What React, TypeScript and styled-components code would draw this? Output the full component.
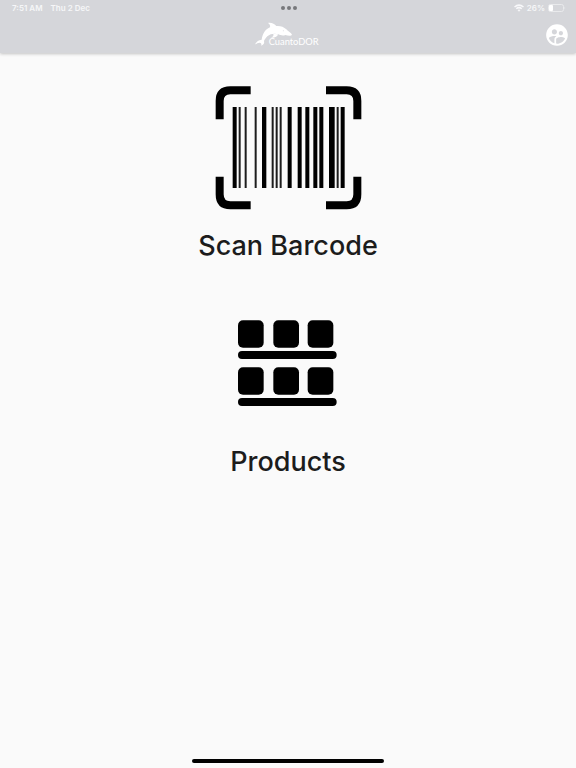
import React from "react";
import styled, { createGlobalStyle } from "styled-components";
import { MdSupervisedUserCircle } from "react-icons/md";

const GlobalStyle = createGlobalStyle`
  * { box-sizing: border-box; }
  body { margin: 0; background: #fafafa; font-family: Inter, "Liberation Sans", sans-serif; }
`;

const Screen = styled.div`
  min-height: 100vh;
  display: flex;
  flex-direction: column;
`;

const Header = styled.header`
  background: #d5d6da;
  color: #fff;
  box-shadow: 0 1px 3px rgba(0, 0, 0, 0.22);
`;

const StatusBar = styled.div`
  display: grid;
  grid-template-columns: 1fr auto 1fr;
  align-items: center;
  height: 16px;
  padding: 0 10px 0 12px;
  font-size: 8px;
  line-height: 16px;
  font-weight: 600;
  color: #f6f6f8;
`;

const StatusGroup = styled.div<{ $end?: boolean; $gap: number }>`
  display: flex;
  align-items: center;
  justify-content: ${(p) => (p.$end ? "flex-end" : "flex-start")};
  gap: ${(p) => p.$gap}px;
`;

const Dots = styled.div`
  display: flex;
  gap: 2px;
`;

const Dot = styled.span`
  width: 4px;
  height: 4px;
  border-radius: 50%;
  background: #77787b;
`;

const TitleBar = styled.div`
  display: grid;
  grid-template-columns: 1fr auto 1fr;
  align-items: center;
  height: 37px;
  padding: 0 6px;
`;

const Logo = styled.svg`
  grid-column: 2;
  display: block;
`;

const AccountButton = styled.button`
  grid-column: 3;
  justify-self: end;
  display: flex;
  padding: 0;
  border: 0;
  background: none;
  color: #fff;
  font-size: 26px;
  cursor: pointer;
`;

const Main = styled.main`
  flex: 1;
  display: flex;
  flex-direction: column;
  align-items: center;
  gap: 58px;
  padding-top: 33px;
`;

const Tile = styled.button<{ $gap: number }>`
  display: flex;
  flex-direction: column;
  align-items: center;
  gap: ${(p) => p.$gap}px;
  padding: 0;
  border: 0;
  background: none;
  color: #1c1c1c;
  font-family: inherit;
  font-size: 27px;
  line-height: 32px;
  font-weight: 500;
  cursor: pointer;
`;

const Footer = styled.footer`
  display: flex;
  justify-content: center;
  padding-bottom: 5px;
`;

const HomeIndicator = styled.div`
  width: 33.33%;
  height: 4px;
  border-radius: 2px;
  background: #000;
`;

const bars: [number, number][] = [
  [81, 12], [99, 6], [117, 6], [147, 6], [169, 13], [198, 6], [210, 6], [222, 6],
  [246, 12], [276, 12], [299, 12], [323, 12], [341, 12], [370, 17], [393, 6], [405, 12],
];

const BarcodeIcon = () => (
  <svg width="147" height="124" viewBox="28 23 441 372" aria-hidden="true">
    <path
      d="M42 123V68Q42 36 74 36H135M361 36H423Q455 36 455 68V123M455 295V348Q455 381 423 381H361M135 381H74Q42 381 42 348V295"
      fill="none"
      stroke="#000"
      strokeWidth="24"
    />
    {bars.map(([x, w]) => (
      <rect key={x} x={x} y="86" width={w} height="243" fill={w === 6 ? "#1d1d1d" : "#000"} />
    ))}
  </svg>
);

const ShelfIcon = () => (
  <svg width="99" height="86" viewBox="41 28 297 258" aria-hidden="true">
    {[29, 170].map((y) => (
      <g key={y}>
        {[41, 147, 250].map((x) => (
          <rect key={x} x={x} y={y} width="77" height="82" rx="15" />
        ))}
        <rect x="41" y={y + 92} width="296" height="24" rx="12" />
      </g>
    ))}
  </svg>
);

const WifiIcon = () => (
  <svg width="10" height="8" viewBox="0 0 20 15" fill="none" stroke="#f8f8fa" strokeWidth="3" aria-label="Wi-Fi">
    <path d="M1 5.5Q10-2 19 5.5M4.5 9Q10 4.5 15.5 9" />
    <path d="M7 11.5Q10 9 13 11.5L10 15Z" fill="#f8f8fa" stroke="none" />
  </svg>
);

const BatteryIcon = () => (
  <svg width="18" height="8" viewBox="0 0 18 8" aria-label="Battery">
    <rect x="0.5" y="0.5" width="15" height="7" rx="2" fill="none" stroke="#e9eaec" />
    <rect x="1" y="1" width="4" height="6" rx="1" fill="#fff" />
    <path d="M16.5 2.5Q18 4 16.5 5.5Z" fill="#e9eaec" />
  </svg>
);

const DolphinLogo = () => (
  <Logo width="66" height="26" viewBox="0 0 198 78" role="img" aria-label="CuantoDOR">
    <path
      d="M0 67C5 58 11 54 20 53C23 35 30 23 45 16C47 10 43 5 39 3C49 1 59 6 64 12C76 11 86 14 94 22C99 28 109 33 111 38C108 43 99 41 91 39C84 42 76 40 70 37C60 34 46 35 37 43C32 48 29 53 27 57C29 63 26 68 19 71C20 65 18 62 14 62C9 62 5 65 0 67Z"
      fill="#fff"
    />
    <path d="M55 35C57 41 53 45 47 47C59 48 68 44 69 37Z" fill="#fff" />
    <circle cx="85" cy="26" r="1.5" fill="#d5d6da" />
    <text x="41" y="70" fontFamily="Lato, sans-serif" fontSize="28" fill="#fff">
      CuantoDOR
    </text>
  </Logo>
);

export default function App() {
  return (
    <Screen>
      <GlobalStyle />
      <Header>
        <StatusBar>
          <StatusGroup $gap={8}>
            <span>7:51 AM</span>
            <span>Thu 2 Dec</span>
          </StatusGroup>
          <Dots>
            <Dot />
            <Dot />
            <Dot />
          </Dots>
          <StatusGroup $end $gap={3}>
            <WifiIcon />
            <span>26%</span>
            <BatteryIcon />
          </StatusGroup>
        </StatusBar>
        <TitleBar>
          <DolphinLogo />
          <AccountButton type="button" aria-label="Account">
            <MdSupervisedUserCircle />
          </AccountButton>
        </TitleBar>
      </Header>
      <Main>
        <Tile type="button" $gap={20}>
          <BarcodeIcon />
          Scan Barcode
        </Tile>
        <Tile type="button" $gap={40}>
          <ShelfIcon />
          Products
        </Tile>
      </Main>
      <Footer>
        <HomeIndicator />
      </Footer>
    </Screen>
  );
}
